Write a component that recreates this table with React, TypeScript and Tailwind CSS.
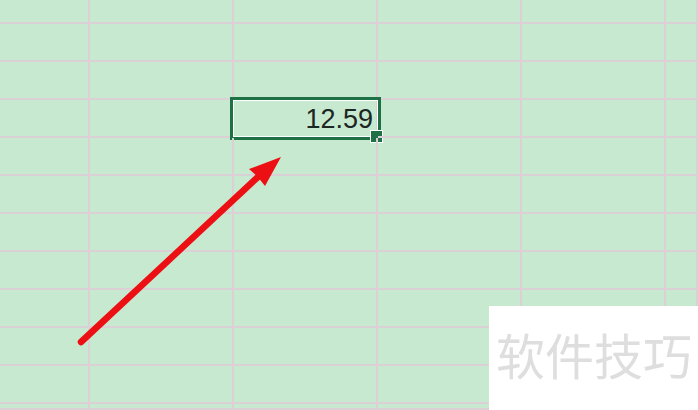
import React from "react";

const colWidths = [90, 144, 144, 144, 144, 32];
const rowHeights = [24, 38, 38, 38, 38, 38, 38, 38, 38, 38, 38, 6];

const SelectedCell = () => (
  <div className="pointer-events-none absolute -left-[4px] -top-[3px] h-[43px] w-[151px] border-[3px] border-[#1d7144]">
    <div className="flex h-full w-full items-center justify-end border border-white pr-[4px] pt-[1px]">
      <span className="font-['Liberation_Sans',Arial,sans-serif] text-[27px] leading-none text-[#1c2622]">
        12.59
      </span>
    </div>
    <div className="absolute -bottom-[6px] -right-[5px] h-[13px] w-[13px] border border-white bg-[#1d7144]" />
  </div>
);

export default function App() {
  return (
    <div className="relative h-[410px] w-[698px] overflow-hidden bg-[#c6e9cf]">
      <div className="flex flex-col">
        {rowHeights.map((h, r) => (
          <div key={r} className="flex" style={{ height: h }}>
            {colWidths.map((w, c) => (
              <div
                key={c}
                className="relative shrink-0 border-b-2 border-r-2 border-[#dad0d6]"
                style={{ width: w }}
              >
                {r === 3 && c === 2 && <SelectedCell />}
              </div>
            ))}
          </div>
        ))}
      </div>

      <svg className="pointer-events-none absolute left-0 top-0" width="698" height="410" viewBox="0 0 698 410">
        <line x1="81" y1="342" x2="259" y2="176" stroke="#ec1014" strokeWidth="6.5" strokeLinecap="round" />
        <polygon points="281,157 249,169 257,176 265,186" fill="#ec1014" />
      </svg>

      <div className="absolute left-[489px] top-[306px] h-[104px] w-[209px] bg-white">
        <div className="pl-[7px] pt-[23px] font-['Noto_Sans_CJK_SC',sans-serif] text-[49px] leading-none text-[#dedede]">
          软件技巧
        </div>
      </div>
    </div>
  );
}
